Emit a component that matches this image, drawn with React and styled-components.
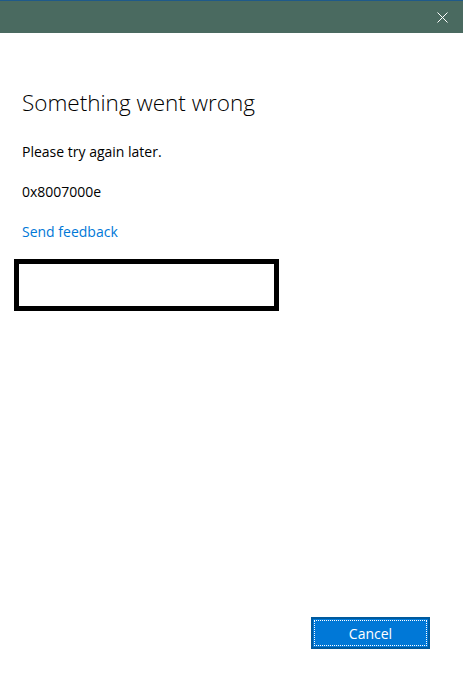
import React from 'react';
import styled, { createGlobalStyle } from 'styled-components';

export default function App() {
  return (
    <>
      <GlobalStyle />
      <Window>
        <TitleBar>
          <CloseButton aria-label="Close">
            <svg width="11" height="11" viewBox="0 0 11 11">
              <path d="M0.5 0.5 L10.5 10.5 M10.5 0.5 L0.5 10.5" stroke="#ffffff" strokeWidth="1" />
            </svg>
          </CloseButton>
        </TitleBar>
        <Body>
          <Heading>Something went wrong</Heading>
          <Message>Please try again later.</Message>
          <Message>0x8007000e</Message>
          <FeedbackLink href="#">Send feedback</FeedbackLink>
          <RedactedBox />
        </Body>
        <Footer>
          <PrimaryButton>Cancel</PrimaryButton>
        </Footer>
      </Window>
    </>
  );
}

const GlobalStyle = createGlobalStyle`
  html, body {
    margin: 0;
    padding: 0;
    background: #ffffff;
  }
  body {
    font-family: "Open Sans", "Noto Sans", sans-serif;
  }
`;

const Window = styled.div`
  display: flex;
  flex-direction: column;
  width: 463px;
  height: 682px;
  background: #ffffff;
`;

const TitleBar = styled.div`
  display: flex;
  justify-content: flex-end;
  align-items: center;
  height: 32px;
  background: #4a6a60;
  border-top: 1px solid #1f5a8a;
`;

const CloseButton = styled.button`
  display: flex;
  align-items: center;
  justify-content: center;
  width: 46px;
  height: 32px;
  padding: 0;
  margin-right: -2px;
  border: none;
  background: transparent;
`;

const Body = styled.div`
  flex: 1;
  display: flex;
  flex-direction: column;
  align-items: flex-start;
  padding: 54px 22px 0;
`;

const Heading = styled.h1`
  margin: 0 0 23px;
  font-size: 22.5px;
  font-weight: 300;
  line-height: 32px;
  color: #000000;
`;

const Message = styled.p`
  margin: 0 0 20px;
  font-size: 14px;
  line-height: 20px;
  color: #000000;
`;

const FeedbackLink = styled.a`
  font-size: 14px;
  line-height: 20px;
  color: #0078d7;
  text-decoration: none;
`;

const RedactedBox = styled.div`
  width: 265px;
  height: 52px;
  box-sizing: border-box;
  margin: 17px 0 0 -8px;
  border: 5px solid #000000;
`;

const Footer = styled.div`
  display: flex;
  justify-content: flex-end;
  padding: 0 33px 33px 0;
`;

const PrimaryButton = styled.button`
  width: 119px;
  height: 32px;
  border: 2px solid #005a9e;
  background: #0078d7;
  color: #ffffff;
  font-family: "Open Sans", "Noto Sans", sans-serif;
  font-size: 14px;
  outline: 1px dotted #ffffff;
  outline-offset: -4px;
`;
